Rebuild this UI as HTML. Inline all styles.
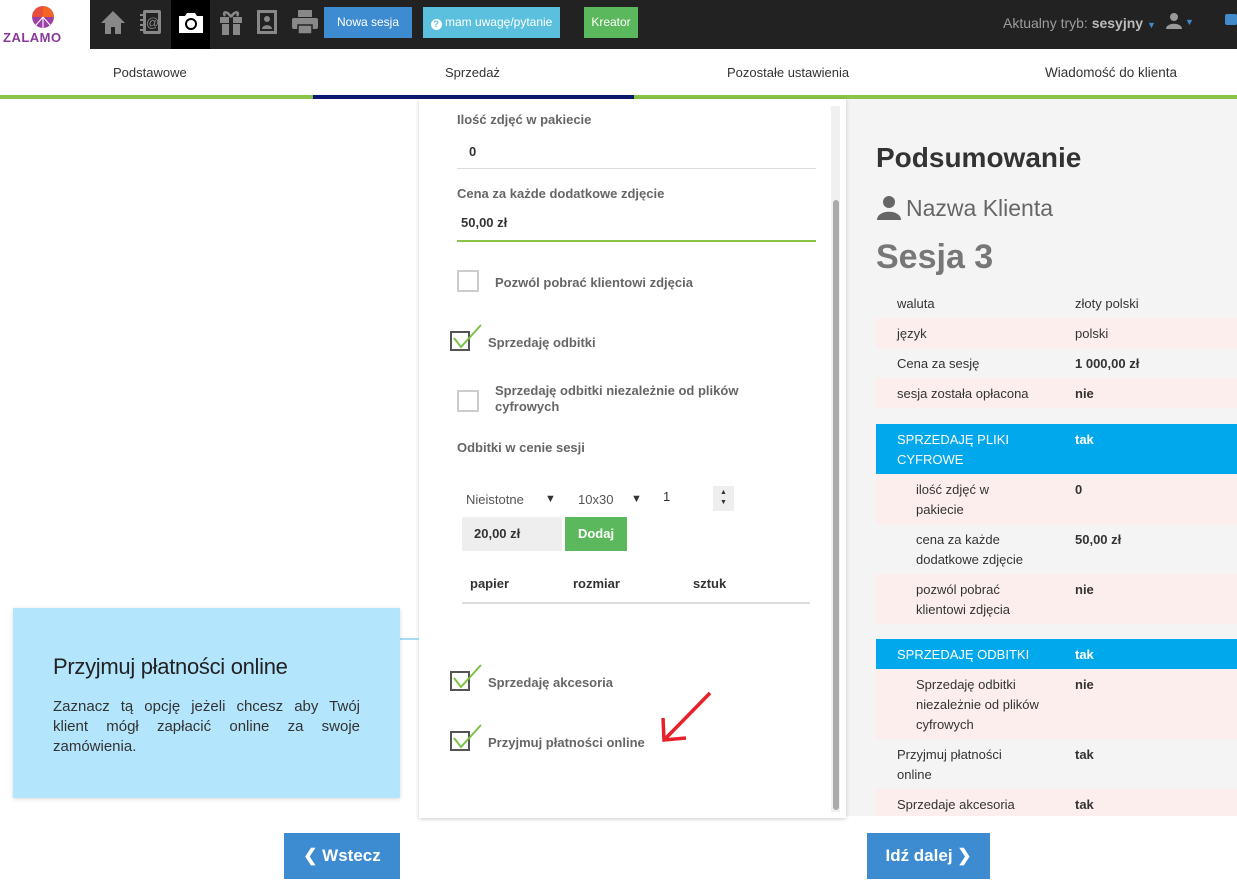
<!DOCTYPE html>
<html><head><meta charset="utf-8"><style>
*{box-sizing:border-box;margin:0;padding:0}
body{width:1237px;height:884px;overflow:hidden;background:#fff;font-family:"Liberation Sans",sans-serif;color:#333;position:relative}
.a{position:absolute}
.top{left:0;top:0;width:1237px;height:49px;background:#222}
.logo{left:0;top:0;width:90px;height:49px;background:#fff}
.btn{position:absolute;top:7px;height:31px;color:#fff;font-size:12px;line-height:31px;text-align:center}
.tabs div{position:absolute;top:65px;font-size:13px;color:#333}
.lbl{font-size:13px;font-weight:bold;color:#666}
.cb{position:absolute;width:22px;height:22px;border:2px solid #ccc;background:#fff}
.cbc{position:absolute;width:20px;height:20px;border:2px solid #555}
.row{position:absolute;left:876px;width:361px;font-size:13px;color:#333;padding:4px 0}
.row .l{position:absolute;left:21px;top:6px;width:160px;line-height:20px}
.row .v{position:absolute;left:199px;top:6px;font-weight:bold;line-height:20px}
.pink{background:#fdeeee}
.blue{background:#02a8ec;color:#fff}
.jl{display:block;text-align:justify;text-align-last:justify;white-space:nowrap}
</style></head><body>
<div class="a top"></div>
<div class="a logo">
 <svg class="a" style="left:31px;top:5px" width="24" height="24" viewBox="0 0 22 22"><circle cx="11" cy="11" r="10" fill="#9b3ea6"/><path d="M11 1A10 10 0 0 1 21 11L11 11Z" fill="#f26522"/><path d="M1 11A10 10 0 0 1 11 1L11 11Z" fill="#e94e3c"/><path d="M11 11 L4 19 M11 11 L18 19 M11 11 L11 21" stroke="#fff" stroke-width="1"/></svg>
 <div class="a" style="left:3px;top:30px;font-size:13px;font-weight:bold;color:#8a3a9b;letter-spacing:0.5px">ZALAMO</div>
</div>
<svg class="a" style="left:99px;top:8px" width="28" height="28" viewBox="0 0 28 28"><path d="M14 3L2 15h4v11h6v-7h4v7h6V15h4z" fill="#888"/></svg>
<svg class="a" style="left:138px;top:8px" width="26" height="28" viewBox="0 0 26 28"><rect x="5" y="2" width="18" height="24" rx="2" fill="#888"/><rect x="8" y="5" width="12" height="18" fill="#222"/><text x="8" y="19" font-size="13" fill="#888" font-family="Liberation Sans">@</text><path d="M2 7h5M2 12h5M2 17h5M2 22h5" stroke="#888" stroke-width="2"/></svg>
<div class="a" style="left:171px;top:0;width:39px;height:49px;background:#000"></div>
<svg class="a" style="left:176px;top:10px" width="30" height="26" viewBox="0 0 30 26"><path d="M3 6h6l2-3h8l2 3h6v17H3z" fill="#fff"/><circle cx="15" cy="14" r="6" fill="#000"/><circle cx="15" cy="14" r="4" fill="#fff"/></svg>
<svg class="a" style="left:218px;top:8px" width="26" height="28" viewBox="0 0 26 28"><rect x="2" y="9" width="22" height="6" fill="#888"/><rect x="4" y="16" width="18" height="11" fill="#888"/><rect x="11" y="9" width="4" height="18" fill="#222"/><path d="M13 9C9 2 4 4 7 8M13 9C17 2 22 4 19 8" stroke="#888" stroke-width="2.5" fill="none"/></svg>
<svg class="a" style="left:255px;top:8px" width="24" height="28" viewBox="0 0 24 28"><rect x="2" y="2" width="20" height="24" fill="#888"/><rect x="5" y="5" width="14" height="18" fill="#222"/><circle cx="12" cy="11" r="3" fill="#888"/><path d="M7 21c0-5 10-5 10 0z" fill="#888"/></svg>
<svg class="a" style="left:290px;top:9px" width="30" height="26" viewBox="0 0 30 26"><rect x="8" y="1" width="14" height="7" fill="#888"/><rect x="2" y="9" width="26" height="11" rx="2" fill="#888"/><rect x="8" y="16" width="14" height="9" fill="#888" stroke="#222" stroke-width="1.5"/></svg>
<div class="btn" style="left:324px;width:88px;background:#3d8bd1">Nowa sesja</div>
<div class="btn" style="left:423px;width:137px;background:#5bc0de"><span style="display:inline-block;width:11px;height:11px;border-radius:50%;background:#fff;color:#5bc0de;font-size:9px;line-height:11px;vertical-align:-1px;font-weight:bold">?</span> mam uwagę/pytanie</div>
<div class="btn" style="left:584px;width:54px;background:#5cb85c">Kreator</div>
<div class="a" style="left:1003px;top:15px;font-size:14px;color:#9d9d9d">Aktualny tryb: <b style="color:#bbb">sesyjny</b> <span style="color:#428bca;font-size:9px">▼</span></div>
<svg class="a" style="left:1165px;top:12px" width="18" height="18" viewBox="0 0 18 18"><circle cx="9" cy="5" r="4" fill="#999"/><path d="M1 17c0-7 16-7 16 0z" fill="#999"/></svg>
<div class="a" style="left:1185px;top:17px;font-size:9px;color:#428bca">▼</div>
<div class="a" style="left:1225px;top:14px;width:12px;height:11px;background:#428bca;border-radius:2px"></div>
<div class="tabs"><div style="left:113px">Podstawowe</div><div style="left:445px">Sprzedaż</div><div style="left:727px">Pozostałe ustawienia</div><div style="left:1045px;font-size:13.5px">Wiadomość do klienta</div></div>
<div class="a" style="left:0;top:95px;width:1237px;height:4px;background:#8bc34a"></div>
<div class="a" style="left:313px;top:95px;width:321px;height:4px;background:#0b1a6e"></div>
<div class="a" style="left:846px;top:99px;width:391px;height:717px;background:#f4f4f4"></div>
<div class="a" style="left:876px;top:142px;font-size:28px;font-weight:bold;color:#333">Podsumowanie</div>
<svg class="a" style="left:876px;top:195px" width="26" height="26" viewBox="0 0 26 26"><circle cx="13" cy="7" r="6" fill="#666"/><path d="M1 25c0-11 24-11 24 0z" fill="#666"/></svg>
<div class="a" style="left:906px;top:195px;font-size:23px;color:#666">Nazwa Klienta</div>
<div class="a" style="left:876px;top:238px;font-size:34px;font-weight:bold;color:#777">Sesja 3</div>
<div class="row" style="top:288px;height:30px"><div class="l">waluta</div><div class="v" style="font-weight:normal">złoty polski</div></div>
<div class="row pink" style="top:318px;height:30px"><div class="l">język</div><div class="v" style="font-weight:normal">polski</div></div>
<div class="row" style="top:348px;height:30px"><div class="l">Cena za sesję</div><div class="v">1 000,00 zł</div></div>
<div class="row pink" style="top:378px;height:30px"><div class="l">sesja została opłacona</div><div class="v">nie</div></div>
<div class="row blue" style="top:424px;height:50px;color:#fff"><div class="l">SPRZEDAJĘ PLIKI CYFROWE</div><div class="v">tak</div></div>
<div class="row pink" style="top:474px;height:50px"><div class="l" style="left:40px;width:120px">ilość zdjęć w pakiecie</div><div class="v">0</div></div>
<div class="row" style="top:524px;height:50px"><div class="l" style="left:40px;width:130px">cena za każde dodatkowe zdjęcie</div><div class="v">50,00 zł</div></div>
<div class="row pink" style="top:574px;height:50px"><div class="l" style="left:40px;width:130px">pozwól pobrać klientowi zdjęcia</div><div class="v">nie</div></div>
<div class="row blue" style="top:639px;height:30px;color:#fff"><div class="l">SPRZEDAJĘ ODBITKI</div><div class="v">tak</div></div>
<div class="row pink" style="top:669px;height:70px"><div class="l" style="left:40px;width:130px">Sprzedaję odbitki niezależnie od plików cyfrowych</div><div class="v">nie</div></div>
<div class="row" style="top:739px;height:50px"><div class="l" style="width:140px">Przyjmuj płatności online</div><div class="v">tak</div></div>
<div class="row pink" style="top:789px;height:27px;overflow:hidden"><div class="l">Sprzedaje akcesoria</div><div class="v">tak</div></div>
<div class="a" style="left:419px;top:99px;width:427px;height:719px;background:#fff;box-shadow:0 1px 4px rgba(0,0,0,.2)"></div>
<div class="a" style="left:831px;top:106px;width:9px;height:706px;background:#f0f0f0"></div>
<div class="a" style="left:833px;top:200px;width:6px;height:610px;background:#aaa;border-radius:3px"></div>
<div class="a lbl" style="left:457px;top:112px">Ilość zdjęć w pakiecie</div>
<div class="a" style="left:469px;top:144px;font-size:13px;font-weight:bold">0</div>
<div class="a" style="left:457px;top:168px;width:359px;height:1px;background:#ddd"></div>
<div class="a lbl" style="left:457px;top:186px">Cena za każde dodatkowe zdjęcie</div>
<div class="a" style="left:461px;top:215px;font-size:13px;font-weight:bold">50,00 zł</div>
<div class="a" style="left:457px;top:240px;width:359px;height:2px;background:#8bc34a"></div>
<div class="cb" style="left:457px;top:270px"></div>
<div class="a lbl" style="left:495px;top:275px">Pozwól pobrać klientowi zdjęcia</div>
<div class="cbc" style="left:450px;top:331px"></div>
<svg class="a" style="left:451px;top:323px" width="32" height="28"><path d="M3 15l7 9L30 2" stroke="#7cc242" stroke-width="2" fill="none"/></svg>
<div class="a lbl" style="left:488px;top:335px">Sprzedaję odbitki</div>
<div class="cb" style="left:457px;top:390px"></div>
<div class="a lbl" style="left:495px;top:383px;line-height:16px;width:280px">Sprzedaję odbitki niezależnie od plików cyfrowych</div>
<div class="a lbl" style="left:457px;top:440px">Odbitki w cenie sesji</div>
<div class="a" style="left:466px;top:492px;font-size:13px;color:#555">Nieistotne</div>
<div class="a" style="left:545px;top:493px;font-size:11px;color:#333">▼</div>
<div class="a" style="left:578px;top:492px;font-size:13px;color:#555">10x30</div>
<div class="a" style="left:631px;top:493px;font-size:11px;color:#333">▼</div>
<div class="a" style="left:663px;top:489px;font-size:13px;color:#333">1</div>
<div class="a" style="left:713px;top:486px;width:21px;height:25px;background:#eee;font-size:7px;text-align:center;line-height:10px;padding-top:2px">▲<br>▼</div>
<div class="a" style="left:462px;top:517px;width:100px;height:34px;background:#eee;font-size:13px;font-weight:bold;line-height:34px;padding-left:12px">20,00 zł</div>
<div class="a" style="left:565px;top:517px;width:62px;height:34px;background:#5cb85c;color:#fff;font-size:13px;font-weight:bold;line-height:34px;text-align:center">Dodaj</div>
<div class="a" style="left:470px;top:576px;font-size:13px;font-weight:bold">papier</div>
<div class="a" style="left:573px;top:576px;font-size:13px;font-weight:bold">rozmiar</div>
<div class="a" style="left:693px;top:576px;font-size:13px;font-weight:bold">sztuk</div>
<div class="a" style="left:462px;top:602px;width:348px;height:2px;background:#ddd"></div>
<div class="cbc" style="left:450px;top:671px"></div>
<svg class="a" style="left:451px;top:663px" width="32" height="28"><path d="M3 15l7 9L30 2" stroke="#7cc242" stroke-width="2" fill="none"/></svg>
<div class="a lbl" style="left:488px;top:675px">Sprzedaję akcesoria</div>
<div class="cbc" style="left:450px;top:731px"></div>
<svg class="a" style="left:451px;top:723px" width="32" height="28"><path d="M3 15l7 9L30 2" stroke="#7cc242" stroke-width="2" fill="none"/></svg>
<div class="a lbl" style="left:488px;top:735px">Przyjmuj płatności online</div>
<svg class="a" style="left:658px;top:690px" width="56" height="54"><path d="M52 3L8 48" stroke="#e8202a" stroke-width="3.5"/><path d="M5 28L6 50L28 48" stroke="#e8202a" stroke-width="3.5" fill="none"/></svg>
<div class="a" style="left:399px;top:638px;width:20px;height:2px;background:#a8dcf4"></div>
<div class="a" style="left:13px;top:608px;width:387px;height:190px;background:#b3e5fc;box-shadow:0 1px 4px rgba(0,0,0,.15)"></div>
<div class="a" style="left:53px;top:654px;font-size:22px;color:#222;letter-spacing:-0.3px">Przyjmuj płatności online</div>
<div class="a" style="left:53px;top:697px;width:307px;font-size:15px;line-height:20px;color:#333">
<span class="jl">Zaznacz tą opcję jeżeli chcesz aby Twój</span>
<span class="jl">klient mógł zapłacić online za swoje</span>
<span style="display:block">zamówienia.</span></div>
<div class="a" style="left:284px;top:833px;width:116px;height:46px;background:#3d8bd1;color:#fff;font-size:17px;font-weight:bold;line-height:46px;text-align:center">❮ Wstecz</div>
<div class="a" style="left:867px;top:833px;width:123px;height:46px;background:#3d8bd1;color:#fff;font-size:17px;font-weight:bold;line-height:46px;text-align:center">Idź dalej ❯</div>
</body></html>
